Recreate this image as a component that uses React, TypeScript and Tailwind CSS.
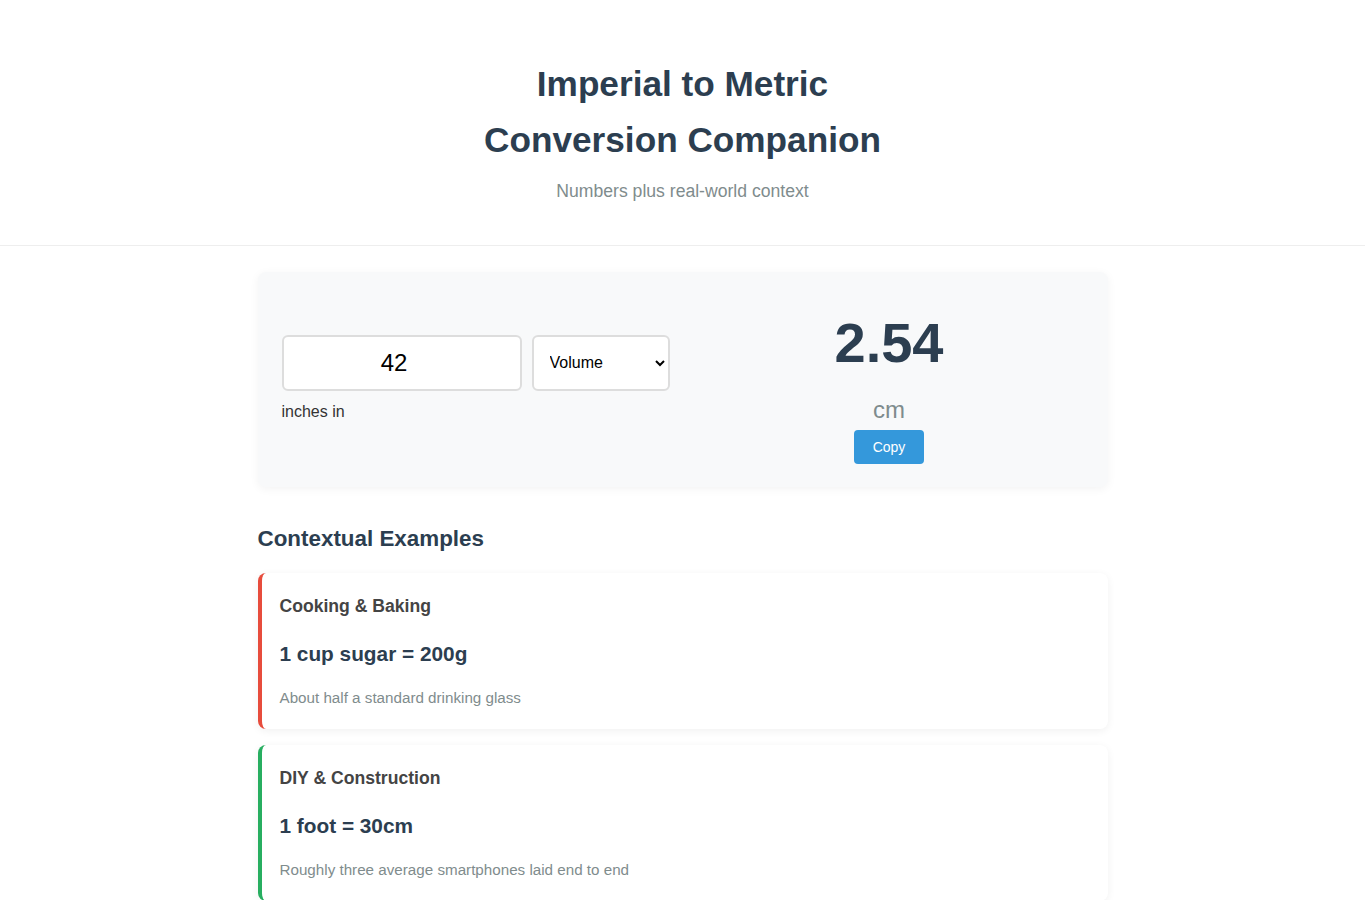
import React, { useState } from 'react';

const examples = [
  {
    title: 'Cooking & Baking',
    value: '1 cup sugar = 200g',
    note: 'About half a standard drinking glass',
    border: 'border-[#e74c3c]',
  },
  {
    title: 'DIY & Construction',
    value: '1 foot = 30cm',
    note: 'Roughly three average smartphones laid end to end',
    border: 'border-[#27ae60]',
  },
];

const App: React.FC = () => {
  const [amount, setAmount] = useState('42');
  const [category, setCategory] = useState('volume');

  return (
    <div className="min-h-screen bg-white font-['Liberation_Sans',Arial,sans-serif] text-[#333]">
      <header className="border-b border-[#eee] pt-[56px] pb-[43px] text-center">
        <h1 className="mx-auto max-w-[440px] text-[35.2px] leading-[56px] font-bold text-[#2c3e50]">
          Imperial to Metric Conversion Companion
        </h1>
        <p className="mt-[12px] text-[17.6px] leading-[22px] text-[#7f8c8d]">Numbers plus real-world context</p>
      </header>

      <main className="mx-auto max-w-[850px] pt-[26px]">
        <section className="grid grid-cols-2 items-center gap-6 rounded-lg bg-[#f8f9fa] px-6 pt-6 pb-[23px] shadow-[0_2px_10px_rgba(0,0,0,0.05)]">
          <div className="mb-[5px]">
            <div className="flex gap-[10px]">
              <input
                type="number"
                value={amount}
                onChange={(e) => setAmount(e.target.value)}
                className="h-[56px] w-[240px] rounded-md border-2 border-[#ddd] bg-white text-center text-[24px] text-black outline-none"
              />
              <select
                value={category}
                onChange={(e) => setCategory(e.target.value)}
                className="h-[56px] w-[138px] rounded-md border-2 border-[#ddd] bg-white pl-[12px] text-[16px] text-black"
              >
                <option value="volume">Volume</option>
                <option value="length">Length</option>
                <option value="weight">Weight</option>
              </select>
            </div>
            <div className="mt-[12px] text-[16px] leading-[18px] text-[#333]">inches in</div>
          </div>
          <div className="flex flex-col items-center">
            <div className="mt-[15px] text-[56px] leading-[64px] font-bold text-[#2c3e50]">2.54</div>
            <div className="mt-[21px] text-[24px] leading-[28px] text-[#7f8c8d]">cm</div>
            <button className="mt-[6px] h-[34px] rounded bg-[#3498db] px-[19px] text-[14px] text-white">Copy</button>
          </div>
        </section>

        <h2 className="mt-[39px] mb-[21px] text-[22.4px] leading-[26px] font-bold text-[#2c3e50]">Contextual Examples</h2>

        <div className="flex flex-col gap-[16px]">
          {examples.map((ex) => (
            <div
              key={ex.title}
              className={`rounded-lg border-l-4 ${ex.border} bg-white py-[22px] pr-5 pl-[18px] shadow-[0_2px_8px_rgba(0,0,0,0.06)]`}
            >
              <h3 className="text-[17.6px] leading-[22px] font-bold text-[#444]">{ex.title}</h3>
              <div className="mt-[25px] text-[20.8px] leading-[24px] font-bold text-[#2c3e50]">{ex.value}</div>
              <p className="mt-[23px] text-[15.2px] leading-[18px] text-[#7f8c8d]">{ex.note}</p>
            </div>
          ))}
        </div>
      </main>
    </div>
  );
};

export default App;
